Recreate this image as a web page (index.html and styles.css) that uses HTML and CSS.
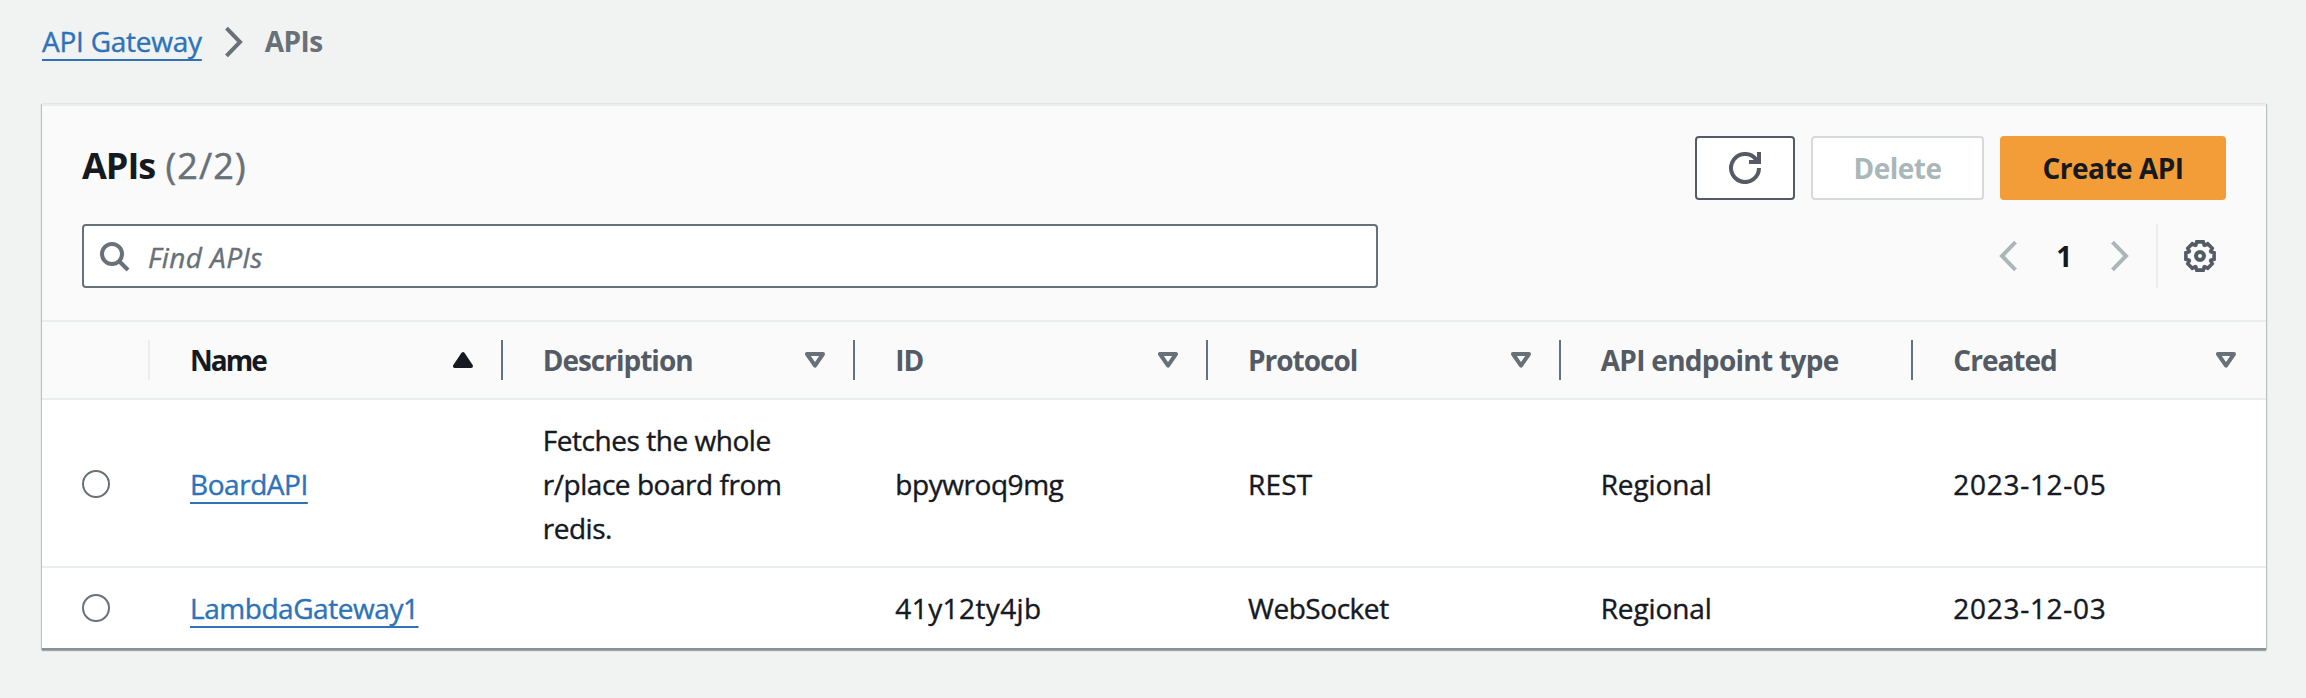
FILE: index.html
```html
<!DOCTYPE html>
<html lang="en">
<head>
<meta charset="utf-8">
<title>API Gateway - APIs</title>
<link rel="stylesheet" href="styles.css">
</head>
<body>
<svg class="defs" aria-hidden="true">
  <symbol id="sort" viewBox="0 0 20 16"><path d="M2 2H18L10 13.6Z" fill="none" stroke="currentColor" stroke-width="4" stroke-linejoin="round"/></symbol>
  <symbol id="sorted" viewBox="0 0 20 16"><path d="M2 14H18L10 2.2Z" fill="currentColor" stroke="currentColor" stroke-width="4" stroke-linejoin="round"/></symbol>
  <symbol id="chevron" viewBox="0 0 20 32"><path d="M2.5 2.2L16 16L2.5 29.8" fill="none" stroke="currentColor" stroke-width="4"/></symbol>
</svg>
<nav class="breadcrumbs">
  <a class="link t-gateway" href="#">API Gateway</a>
  <svg class="crumb-sep"><use href="#chevron"/></svg>
  <span class="current">APIs</span>
</nav>
<main class="panel">
  <header class="panel-head">
    <div class="title-row">
      <h1 class="title">APIs <span class="count">(2/2)</span></h1>
      <div class="actions">
        <button class="btn refresh" aria-label="Refresh">
          <svg width="32" height="32" viewBox="0 0 32 32" fill="none" stroke="currentColor" stroke-width="4"><path d="M30 16A14 14 0 1 1 27.5 8"/><path d="M30 0V10H20"/></svg>
        </button>
        <button class="btn delete" disabled>Delete</button>
        <button class="btn create">Create API</button>
      </div>
    </div>
    <div class="tools-row">
      <label class="search">
        <svg width="32" height="32" viewBox="0 0 32 32" fill="none" stroke="currentColor" stroke-width="4"><circle cx="14" cy="14" r="10"/><path d="M21 21L30 30"/></svg>
        <span>Find APIs</span>
      </label>
      <div class="paging">
        <svg class="page-arrow prev"><use href="#chevron"/></svg>
        <span class="page">1</span>
        <svg class="page-arrow"><use href="#chevron"/></svg>
        <span class="settings">
          <svg width="32" height="32" viewBox="-16 -16 32 32" fill="none" stroke="currentColor" stroke-width="4"><circle r="4"/><path stroke-linejoin="miter" stroke-width="3.6" d="M10.9-4.2L14.1-3.2V3.2L10.9 4.2L10.7 4.7L12.2 7.7L7.7 12.2L4.7 10.7L4.2 10.9L3.2 14.1H-3.2L-4.2 10.9L-4.7 10.7L-7.7 12.2L-12.2 7.7L-10.7 4.7L-10.9 4.2L-14.1 3.2V-3.2L-10.9-4.2L-10.7-4.7L-12.2-7.7L-7.7-12.2L-4.7-10.7L-4.2-10.9L-3.2-14.1H3.2L4.2-10.9L4.7-10.7L7.7-12.2L12.2-7.7L10.7-4.7Z"/></svg>
        </span>
      </div>
    </div>
  </header>
  <div class="row head">
    <div class="cell pick"></div>
    <div class="cell active"><span class="t-name">Name</span><svg class="sort"><use href="#sorted"/></svg></div>
    <div class="cell"><span>Description</span><svg class="sort"><use href="#sort"/></svg></div>
    <div class="cell"><span>ID</span><svg class="sort"><use href="#sort"/></svg></div>
    <div class="cell"><span>Protocol</span><svg class="sort"><use href="#sort"/></svg></div>
    <div class="cell"><span class="t-endpoint">API endpoint type</span></div>
    <div class="cell"><span>Created</span><svg class="sort"><use href="#sort"/></svg></div>
  </div>
  <div class="row">
    <div class="cell pick"><span class="radio"></span></div>
    <div class="cell"><a class="link" href="#">BoardAPI</a></div>
    <div class="cell"><span>Fetches the whole<br>r/place board from<br>redis.</span></div>
    <div class="cell">bpywroq9mg</div>
    <div class="cell"><span class="t-rest">REST</span></div>
    <div class="cell"><span class="t-region">Regional</span></div>
    <div class="cell"><span class="t-date">2023-12-05</span></div>
  </div>
  <div class="row last">
    <div class="cell pick"><span class="radio"></span></div>
    <div class="cell"><a class="link" href="#">LambdaGateway1</a></div>
    <div class="cell"></div>
    <div class="cell"><span class="t-id">41y12ty4jb</span></div>
    <div class="cell">WebSocket</div>
    <div class="cell"><span class="t-region">Regional</span></div>
    <div class="cell"><span class="t-date">2023-12-03</span></div>
  </div>
</main>
</body>
</html>
```
FILE: styles.css
```css
* { box-sizing: border-box; }
body {
  margin: 0;
  min-height: 100vh;
  padding: 19px 40px 0 42px;
  background: #f1f3f3;
  color: #16191f;
  font: 28px/44px "Open Sans", "Noto Sans", sans-serif;
  letter-spacing: -0.45px;
  -webkit-text-stroke: .4px currentColor;
}
.defs { display: none; }
svg { display: block; flex: none; }

.link {
  color: #2e73b8;
  text-decoration: underline 2px;
  text-underline-offset: 7px;
  text-decoration-skip-ink: none;
}

.breadcrumbs { display: flex; align-items: center; height: 44px; }
.crumb-sep { width: 20px; height: 32px; margin: 2px 21px 0 22px; color: #687078; }
.current { font-weight: 700; color: #687078; letter-spacing: -.6px; -webkit-text-stroke: 0; }

.panel {
  margin-top: 41px;
  width: 2224px;
  background: #fff;
  border-top: 2px solid #eaeded;
  border-bottom: 2px solid #879196;
  box-shadow: 0 1px 1px rgba(0, 28, 36, .3), 1px 0 1px rgba(0, 28, 36, .2), -1px 0 1px rgba(0, 28, 36, .2);
}
.panel-head {
  height: 216px;
  padding: 30px 40px 0;
  background: #fafafa;
  border-bottom: 2px solid #eaeded;
}
.title-row, .tools-row { display: flex; justify-content: space-between; height: 64px; }
.tools-row { margin-top: 24px; }
.title { margin: 0; font-size: 36px; line-height: 60px; font-weight: 700; letter-spacing: -1px; -webkit-text-stroke: 0; }
.count { margin-left: 2px; font-weight: 400; color: #687078; letter-spacing: 1.1px; -webkit-text-stroke: .5px currentColor; }

.actions { display: flex; gap: 16px; }
.btn {
  display: flex;
  align-items: center;
  justify-content: center;
  height: 64px;
  padding: 0;
  border: 2px solid #545b64;
  border-radius: 4px;
  background: #fff;
  color: #545b64;
  font: 700 28px/44px "Open Sans", "Noto Sans", sans-serif;
  letter-spacing: -.5px;
  -webkit-text-stroke: 0;
}
.refresh { width: 100px; }
.delete { width: 173px; border-color: #d5dbdb; color: #aab7b8; }
.create { width: 226px; border-color: #f29d38; background: #f29d38; color: #16191f; }

.search {
  display: flex;
  align-items: center;
  width: 1296px;
  padding-left: 14px;
  border: 2px solid #687078;
  border-radius: 4px;
  background: #fff;
  color: #687078;
  font-style: italic;
  letter-spacing: .4px;
}
.search span { margin: 2px 0 0 18px; }

.paging { display: flex; align-items: center; color: #aab7b8; }
.page-arrow { width: 20px; height: 32px; }
.prev { transform: scaleX(-1); }
.page { width: 92px; text-align: center; font-weight: 700; color: #16191f; -webkit-text-stroke: 0; }
.settings {
  display: flex;
  align-items: center;
  height: 64px;
  margin-left: 26px;
  padding: 0 10px 0 26px;
  border-left: 2px solid #eaeded;
  color: #545b64;
}

.row {
  display: grid;
  grid-template-columns: 108px repeat(6, 1fr);
  align-items: center;
  padding: 18px 0 16px;
  border-bottom: 2px solid #eaeded;
}
.cell { display: flex; align-items: center; padding-left: 40px; min-width: 0; }
.cell + .cell { padding-right: 30px; }
.row.last { padding: 18px 0; border-bottom: 0; }
.row.head {
  padding: 18px 0;
  background: #fafafa;
  color: #545b64;
  font-weight: 700;
  letter-spacing: -1px;
  -webkit-text-stroke: 0;
}
.head .cell { height: 40px; justify-content: space-between; border-right: 2px solid #687078; padding-right: 28px; }
.head .pick { border-right-color: #eaeded; }
.head .cell:last-child { border-right: 0; padding-right: 30px; }
.head .active { color: #16191f; }
.sort { width: 20px; height: 16px; color: #687078; }
.active .sort { color: #16191f; }
.radio { width: 28px; height: 28px; border: 2px solid #687078; border-radius: 50%; background: #fff; }

.t-gateway { letter-spacing: -.25px; }
.t-name { letter-spacing: -2px; }
.t-endpoint { letter-spacing: -.7px; white-space: nowrap; }
.t-rest { letter-spacing: .2px; }
.t-region { letter-spacing: -.1px; }
.t-date { letter-spacing: .7px; }
.t-id { letter-spacing: .4px; }
```
